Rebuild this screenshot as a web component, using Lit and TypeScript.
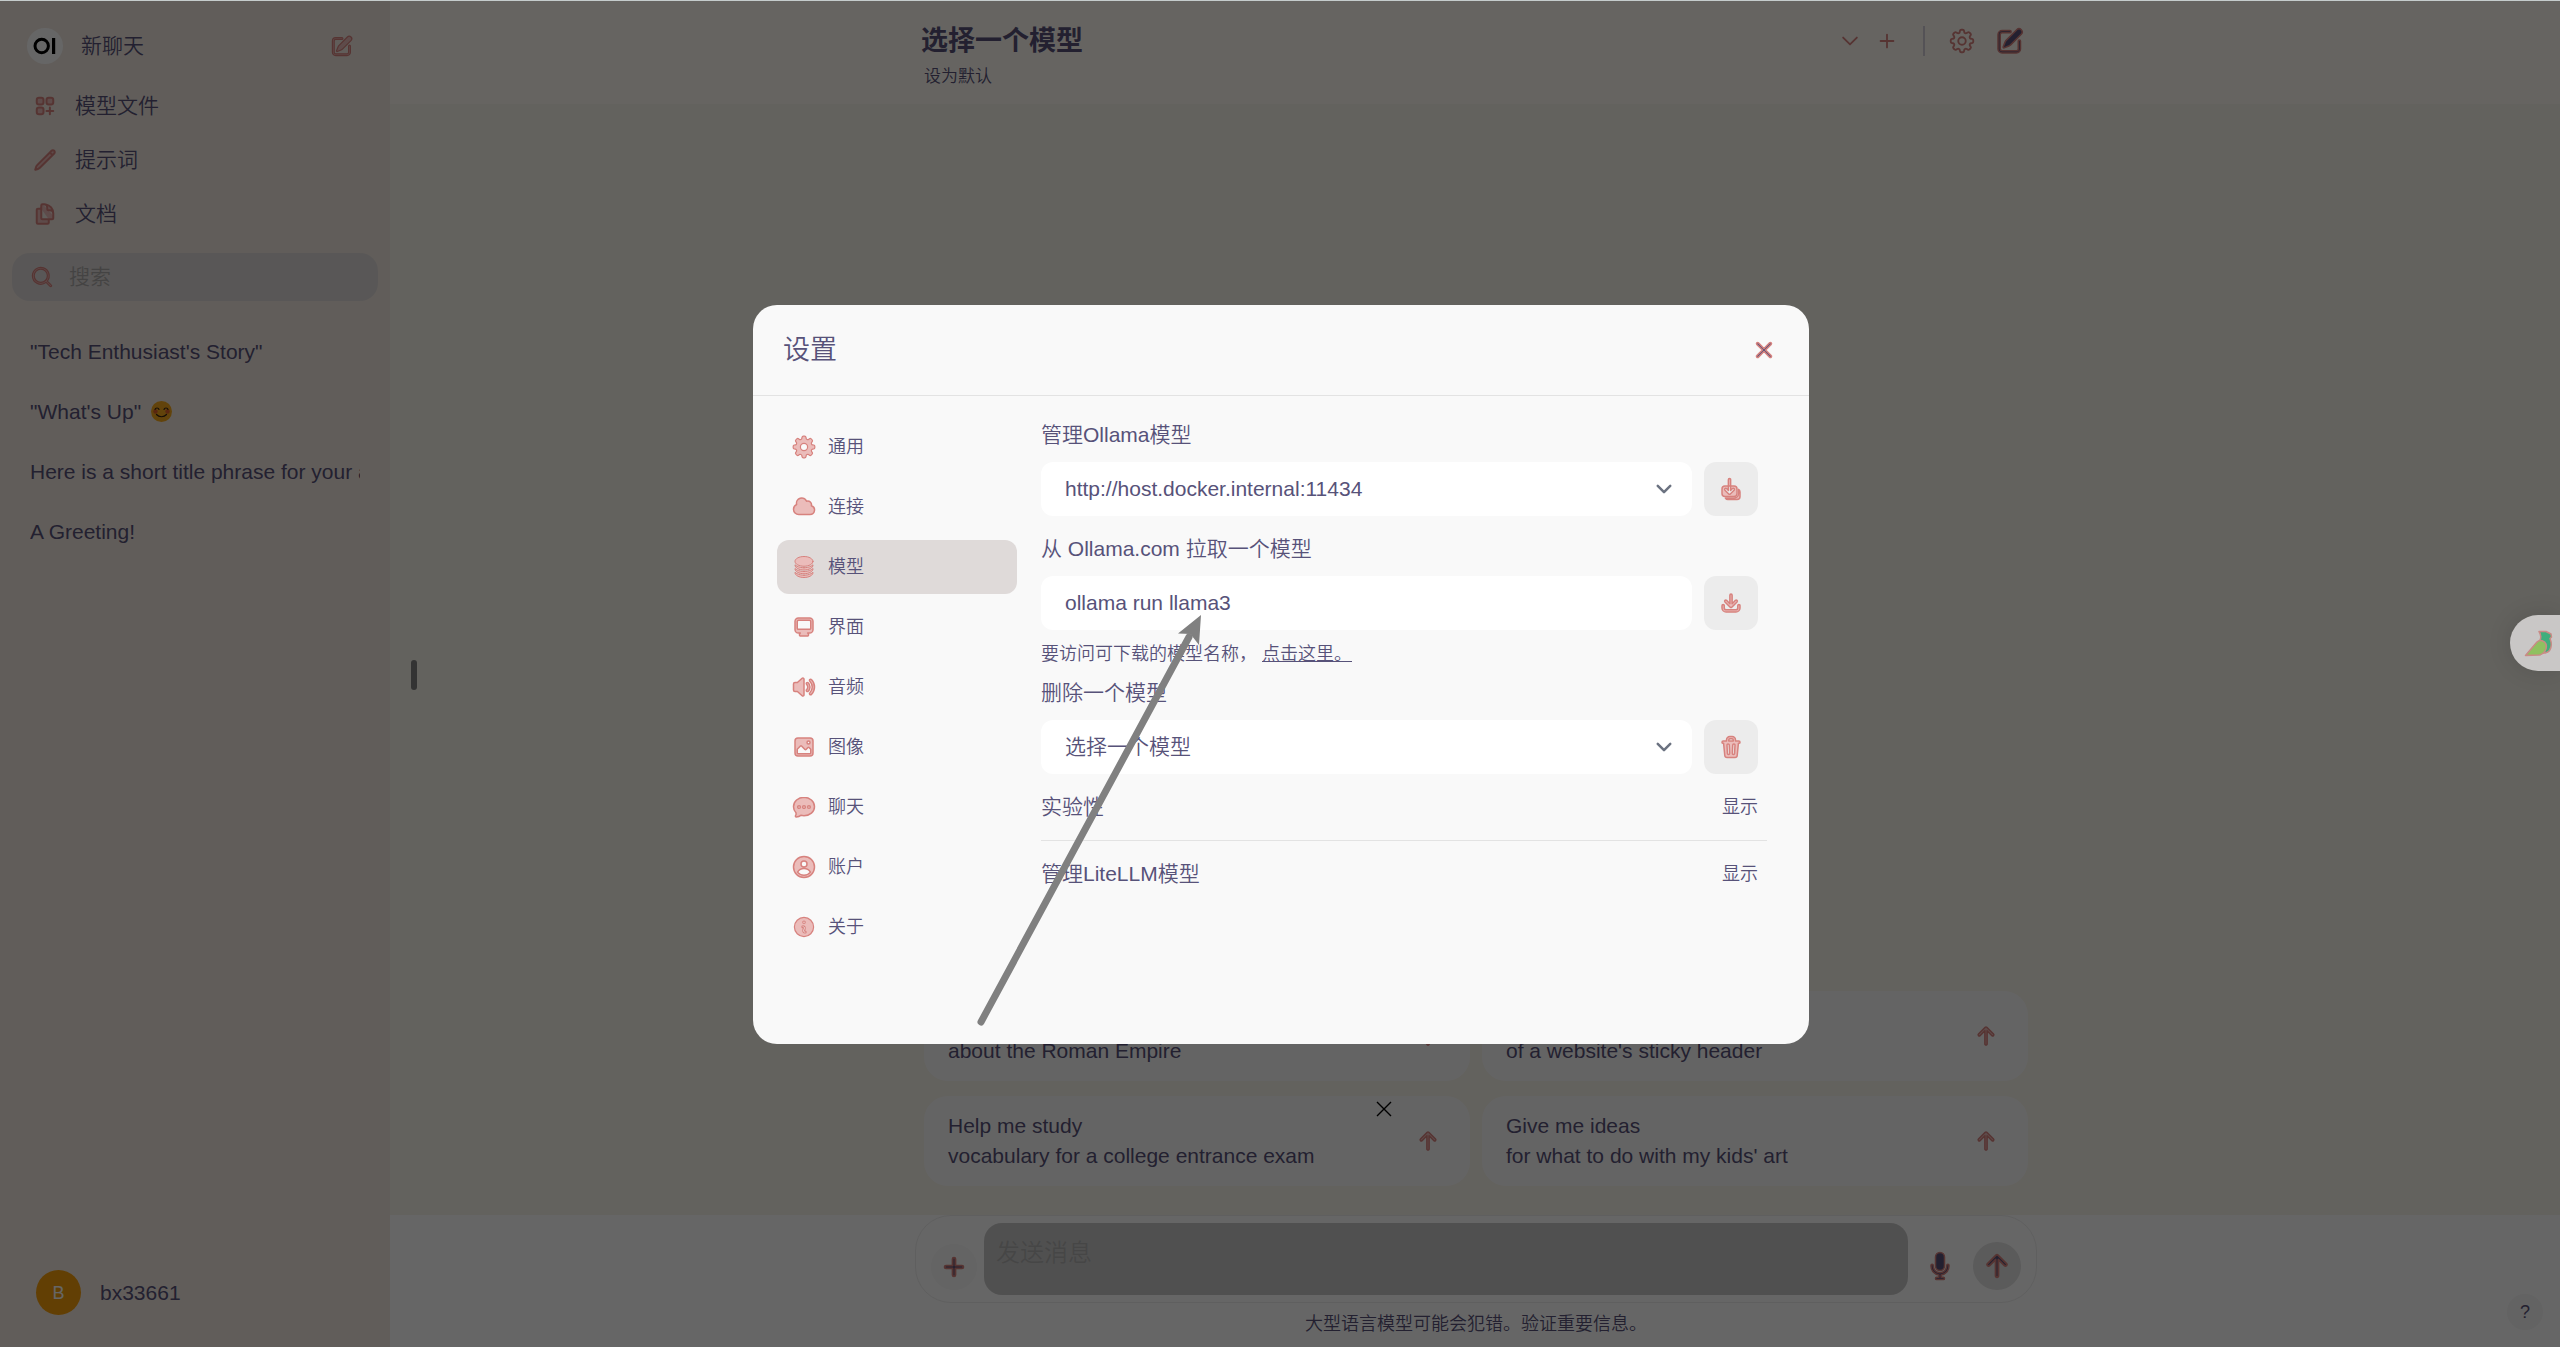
import { LitElement, html, svg, css } from "lit";
import { customElement, property } from "lit/decorators.js";

type Icon = { box: string; paths: string[]; outline?: number };

const ICONS: Record<string, Icon> = {
  edit: {
    box: "0 0 20 20",
    paths: [
      "M5.433 13.917l1.262-3.155A4 4 0 017.58 9.42l6.92-6.918a2.121 2.121 0 013 3l-6.92 6.918c-.383.383-.84.685-1.343.886l-3.154 1.262a.5.5 0 01-.65-.65z",
      "M3.5 5.75c0-.69.56-1.25 1.25-1.25H10A.75.75 0 0010 3H4.75A2.75 2.75 0 002 5.75v9.5A2.75 2.75 0 004.75 18h9.5A2.75 2.75 0 0017 15.25V10a.75.75 0 00-1.5 0v5.25c0 .69-.56 1.25-1.25 1.25h-9.5c-.69 0-1.25-.56-1.25-1.25v-9.5z",
    ],
  },
  modelfiles: {
    box: "0 0 24 24",
    outline: 2,
    paths: [
      "M13.5 16.875h3.375m0 0h3.375m-3.375 0V13.5m0 3.375v3.375M6 10.5h2.25a2.25 2.25 0 002.25-2.25V6a2.25 2.25 0 00-2.25-2.25H6A2.25 2.25 0 003.75 6v2.25A2.25 2.25 0 006 10.5zm0 9.75h2.25A2.25 2.25 0 0010.5 18v-2.25a2.25 2.25 0 00-2.25-2.25H6a2.25 2.25 0 00-2.25 2.25V18A2.25 2.25 0 006 20.25zm9.75-9.75H18a2.25 2.25 0 002.25-2.25V6A2.25 2.25 0 0018 3.75h-2.25A2.25 2.25 0 0013.5 6v2.25a2.25 2.25 0 002.25 2.25z",
    ],
  },
  pencil: {
    box: "0 0 24 24",
    outline: 2,
    paths: [
      "M16.862 4.487l1.687-1.688a1.875 1.875 0 112.652 2.652L6.832 19.82a4.5 4.5 0 01-1.897 1.13l-2.685.8.8-2.685a4.5 4.5 0 011.13-1.897L16.863 4.487zm0 0L19.5 7.125",
    ],
  },
  documents: {
    box: "0 0 24 24",
    outline: 2,
    paths: [
      "M15.75 17.25v3.375c0 .621-.504 1.125-1.125 1.125h-9.75a1.125 1.125 0 01-1.125-1.125V7.875c0-.621.504-1.125 1.125-1.125H6.75a9.06 9.06 0 011.5.124m7.5 10.376h3.375c.621 0 1.125-.504 1.125-1.125V11.25c0-4.46-3.243-8.161-7.5-8.876a9.06 9.06 0 00-1.5-.124H9.375c-.621 0-1.125.504-1.125 1.125v3.5m7.5 10.375H9.375a1.125 1.125 0 01-1.125-1.125v-9.25m12 6.625v-1.875a3.375 3.375 0 00-3.375-3.375h-1.5a1.125 1.125 0 01-1.125-1.125v-1.5a3.375 3.375 0 00-3.375-3.375H9.75",
    ],
  },
  search: {
    box: "0 0 20 20",
    paths: [
      "M9 3.5a5.5 5.5 0 100 11 5.5 5.5 0 000-11zM2 9a7 7 0 1112.452 4.391l3.328 3.329a.75.75 0 11-1.06 1.06l-3.329-3.328A7 7 0 012 9z",
    ],
  },
  chevron: { box: "0 0 24 24", outline: 2, paths: ["M19.5 8.25l-7.5 7.5-7.5-7.5"] },
  selectArrow: { box: "0 0 24 24", outline: 3, paths: ["M19.500 8.250l-7.500 7.500-7.500-7.500"] },
  thinPlus: { box: "0 0 24 24", outline: 2, paths: ["M12 5v14M5 12h14"] },
  gearOutline: {
    box: "0 0 24 24",
    outline: 1.5,
    paths: [
      "M10.343 3.94c.09-.542.56-.94 1.11-.94h1.093c.55 0 1.02.398 1.11.94l.149.894c.07.424.384.764.78.93.398.164.855.142 1.205-.108l.737-.527a1.125 1.125 0 011.45.12l.773.774c.39.389.44 1.002.12 1.45l-.527.737c-.25.35-.272.806-.107 1.204.165.397.505.71.93.78l.893.15c.543.09.94.56.94 1.109v1.094c0 .55-.397 1.02-.94 1.11l-.893.149c-.425.07-.765.383-.93.78-.165.398-.143.854.107 1.204l.527.738c.32.447.269 1.06-.12 1.45l-.774.773a1.125 1.125 0 01-1.449.12l-.738-.527c-.35-.25-.806-.272-1.203-.107-.397.165-.71.505-.781.929l-.149.894c-.09.542-.56.94-1.11.94h-1.094c-.55 0-1.019-.398-1.11-.94l-.148-.894c-.071-.424-.384-.764-.781-.93-.398-.164-.854-.142-1.204.108l-.738.527c-.447.32-1.06.269-1.45-.12l-.773-.774a1.125 1.125 0 01-.12-1.45l.527-.737c.25-.35.273-.806.108-1.204-.165-.397-.505-.71-.93-.78l-.894-.15c-.542-.09-.94-.56-.94-1.109v-1.094c0-.55.398-1.02.94-1.11l.894-.149c.424-.07.765-.383.93-.78.165-.398.143-.854-.107-1.204l-.527-.738a1.125 1.125 0 01.12-1.45l.773-.773a1.125 1.125 0 011.45-.12l.737.527c.35.25.807.272 1.204.107.397-.165.71-.505.78-.929l.15-.894z",
      "M15 12a3 3 0 11-6 0 3 3 0 016 0z",
    ],
  },
  gear: {
    box: "2 2 20 20",
    paths: [
      "M10.343 3.94c.09-.542.56-.94 1.11-.94h1.093c.55 0 1.02.398 1.11.94l.149.894c.07.424.384.764.78.93.398.164.855.142 1.205-.108l.737-.527a1.125 1.125 0 011.45.12l.773.774c.39.389.44 1.002.12 1.45l-.527.737c-.25.35-.272.806-.107 1.204.165.397.505.71.93.78l.893.15c.543.09.94.56.94 1.109v1.094c0 .55-.397 1.02-.94 1.11l-.893.149c-.425.07-.765.383-.93.78-.165.398-.143.854.107 1.204l.527.738c.32.447.269 1.06-.12 1.45l-.774.773a1.125 1.125 0 01-1.449.12l-.738-.527c-.35-.25-.806-.272-1.203-.107-.397.165-.71.505-.781.929l-.149.894c-.09.542-.56.94-1.11.94h-1.094c-.55 0-1.019-.398-1.11-.94l-.148-.894c-.071-.424-.384-.764-.781-.93-.398-.164-.854-.142-1.204.108l-.738.527c-.447.32-1.06.269-1.45-.12l-.773-.774a1.125 1.125 0 01-.12-1.45l.527-.737c.25-.35.273-.806.108-1.204-.165-.397-.505-.71-.93-.78l-.894-.15c-.542-.09-.94-.56-.94-1.109v-1.094c0-.55.398-1.02.94-1.11l.894-.149c.424-.07.765-.383.93-.78.165-.398.143-.854-.107-1.204l-.527-.738a1.125 1.125 0 01.12-1.45l.773-.773a1.125 1.125 0 011.45-.12l.737.527c.35.25.807.272 1.204.107.397-.165.71-.505.78-.929l.15-.894zM15 12a3 3 0 11-6 0 3 3 0 016 0z",
    ],
  },
  cloud: {
    box: "0 0 16 16",
    paths: [
      "M1 9.5A3.5 3.5 0 0 0 4.5 13H12a3 3 0 0 0 .917-5.857 2.503 2.503 0 0 0-3.198-3.019 3.5 3.5 0 0 0-6.628 2.171A3.5 3.5 0 0 0 1 9.5Z",
    ],
  },
  database: {
    box: "0 0 24 24",
    paths: [
      "M21 6.375c0 2.692-4.03 4.875-9 4.875S3 9.067 3 6.375 7.03 1.5 12 1.5s9 2.183 9 4.875z",
      "M12 12.75c2.685 0 5.19-.586 7.078-1.609a8.283 8.283 0 001.897-1.384c.016.121.025.244.025.368C21 12.817 16.97 15 12 15s-9-2.183-9-4.875c0-.124.009-.247.025-.368a8.285 8.285 0 001.897 1.384C6.809 12.164 9.315 12.75 12 12.75z",
      "M12 16.5c2.685 0 5.19-.586 7.078-1.609a8.282 8.282 0 001.897-1.384c.016.121.025.244.025.368 0 2.692-4.03 4.875-9 4.875s-9-2.183-9-4.875c0-.124.009-.247.025-.368a8.284 8.284 0 001.897 1.384C6.809 15.914 9.315 16.5 12 16.5z",
      "M12 20.25c2.685 0 5.19-.586 7.078-1.609a8.282 8.282 0 001.897-1.384c.016.121.025.244.025.368 0 2.692-4.03 4.875-9 4.875s-9-2.183-9-4.875c0-.124.009-.247.025-.368a8.284 8.284 0 001.897 1.384C6.809 19.664 9.315 20.25 12 20.25z",
    ],
  },
  screen: {
    box: "0 0 16 16",
    paths: [
      "M2 4.25A2.25 2.25 0 0 1 4.25 2h7.5A2.25 2.25 0 0 1 14 4.25v5.5A2.25 2.25 0 0 1 11.75 12h-1.312c.1.128.21.248.328.36a.75.75 0 0 1 .234.545v.345a.75.75 0 0 1-.75.75h-4.5a.75.75 0 0 1-.75-.75v-.345a.75.75 0 0 1 .234-.545c.118-.111.228-.232.328-.36H4.25A2.25 2.25 0 0 1 2 9.75v-5.5Zm2.25-.75a.75.75 0 0 0-.75.75v4.5c0 .414.336.75.75.75h7.5a.75.75 0 0 0 .75-.75v-4.5a.75.75 0 0 0-.75-.75h-7.5Z",
    ],
  },
  speaker: {
    box: "0 0 16 16",
    paths: [
      "M7.557 2.066A.75.75 0 0 1 8 2.75v10.5a.75.75 0 0 1-1.248.56L3.59 11H2a1 1 0 0 1-1-1V6a1 1 0 0 1 1-1h1.59l3.162-2.81a.75.75 0 0 1 .805-.124ZM12.95 3.05a.75.75 0 1 0-1.06 1.06 5.5 5.5 0 0 1 0 7.78.75.75 0 1 0 1.06 1.06 7 7 0 0 0 0-9.9Z",
      "M10.828 5.172a.75.75 0 1 0-1.06 1.06 2.5 2.5 0 0 1 0 3.536.75.75 0 1 0 1.06 1.06 4 4 0 0 0 0-5.656Z",
    ],
  },
  photo: {
    box: "0 0 16 16",
    paths: [
      "M2 4a2 2 0 0 1 2-2h8a2 2 0 0 1 2 2v8a2 2 0 0 1-2 2H4a2 2 0 0 1-2-2V4Zm10.5 5.707a.5.5 0 0 0-.146-.353l-1-1a.5.5 0 0 0-.708 0L9.354 9.646a.5.5 0 0 1-.708 0L6.354 7.354a.5.5 0 0 0-.708 0l-2 2a.5.5 0 0 0-.146.353V12a.5.5 0 0 0 .5.5h8a.5.5 0 0 0 .5-.5V9.707ZM12 5a1 1 0 1 1-2 0 1 1 0 0 1 2 0Z",
    ],
  },
  chat: {
    box: "0 0 16 16",
    paths: [
      "M8 1.500C4.130 1.500 1 4.300 1 7.900c0 1.500.62 2.900 1.660 3.900.2.700.1 1.400-.3 2-.25.4.05.9.5.86 1.300-.1 2.300-.5 3-1.100.68.2 1.400.3 2.140.3 3.870 0 7-2.700 7-5.960C15 4.300 11.870 1.500 8 1.500ZM5.600 8a.9.9 0 1 1-1.800 0 .9.9 0 0 1 1.800 0ZM8.900 8a.9.9 0 1 1-1.800 0 .9.9 0 0 1 1.800 0ZM12.200 8a.9.9 0 1 1-1.800 0 .9.9 0 0 1 1.800 0Z",
    ],
  },
  user: {
    box: "0 0 16 16",
    paths: [
      "M15 8A7 7 0 1 1 1 8a7 7 0 0 1 14 0Zm-5-2a2 2 0 1 1-4 0 2 2 0 0 1 4 0ZM8 9c-1.825 0-3.422.977-4.295 2.437A5.49 5.49 0 0 0 8 13.5a5.49 5.49 0 0 0 4.294-2.063A4.997 4.997 0 0 0 8 9Z",
    ],
  },
  info: {
    box: "0 0 20 20",
    paths: [
      "M18 10a8 8 0 11-16 0 8 8 0 0116 0zm-7-4a1 1 0 11-2 0 1 1 0 012 0zM9 9a.75.75 0 000 1.5h.253a.25.25 0 01.244.304l-.459 2.066A1.75 1.75 0 0010.747 15H11a.75.75 0 000-1.5h-.253a.25.25 0 01-.244-.304l.459-2.066A1.75 1.75 0 009.253 9H9z",
    ],
  },
  updateAll: {
    box: "0 0 16 16",
    paths: [
      "M7 1a.75.75 0 0 1 .75.75V6h-1.5V1.75A.75.75 0 0 1 7 1ZM6.25 6v2.94L5.03 7.72a.75.75 0 0 0-1.06 1.06l2.5 2.5a.75.75 0 0 0 1.06 0l2.5-2.5a.75.75 0 1 0-1.06-1.06L7.75 8.94V6H10a2 2 0 0 1 2 2v3a2 2 0 0 1-2 2H4a2 2 0 0 1-2-2V8a2 2 0 0 1 2-2h2.25Z",
      "M4.268 14A2 2 0 0 0 6 15h6a2 2 0 0 0 2-2v-3a2 2 0 0 0-1-1.732V11a3 3 0 0 1-3 3H4.268Z",
    ],
  },
  download: {
    box: "0 0 16 16",
    paths: [
      "M8.75 2.75a.75.75 0 0 0-1.5 0v5.69L5.03 6.22a.75.75 0 0 0-1.06 1.06l3.5 3.5a.75.75 0 0 0 1.06 0l3.5-3.5a.75.75 0 0 0-1.06-1.06L8.75 8.44V2.75Z",
      "M3.5 9.75a.75.75 0 0 0-1.5 0v1.5A2.75 2.75 0 0 0 4.75 14h6.5A2.75 2.75 0 0 0 14 11.25v-1.5a.75.75 0 0 0-1.5 0v1.5c0 .69-.56 1.25-1.25 1.25h-6.5c-.69 0-1.25-.56-1.25-1.25v-1.5Z",
    ],
  },
  trash: {
    box: "0 0 16 16",
    paths: [
      "M5 3.25V4H2.75a.75.75 0 0 0 0 1.5h.3l.815 8.15A1.5 1.5 0 0 0 5.357 15h5.285a1.5 1.5 0 0 0 1.493-1.35l.815-8.15h.3a.75.75 0 0 0 0-1.5H11v-.75A2.25 2.25 0 0 0 8.75 1h-1.5A2.25 2.25 0 0 0 5 3.25Zm2.25-.75a.75.75 0 0 0-.75.75V4h3v-.75a.75.75 0 0 0-.75-.75h-1.5ZM6.05 6a.75.75 0 0 1 .787.713l.275 5.5a.75.75 0 0 1-1.498.075l-.275-5.5A.75.75 0 0 1 6.05 6Zm3.9 0a.75.75 0 0 1 .712.787l-.275 5.5a.75.75 0 0 1-1.498-.075l.275-5.5a.75.75 0 0 1 .786-.711Z",
    ],
  },
  close: {
    box: "0 0 20 20",
    paths: [
      "M6.28 5.22a.75.75 0 00-1.06 1.06L8.94 10l-3.72 3.72a.75.75 0 101.06 1.06L10 11.06l3.72 3.72a.75.75 0 101.06-1.06L11.06 10l3.72-3.72a.75.75 0 00-1.06-1.06L10 8.94 6.28 5.22z",
    ],
  },
  arrowUp: {
    box: "0 0 16 16",
    paths: [
      "M8 14a.75.75 0 0 1-.75-.75V4.56L4.03 7.78a.75.75 0 0 1-1.06-1.06l4.5-4.5a.75.75 0 0 1 1.06 0l4.5 4.5a.75.75 0 0 1-1.06 1.06L8.75 4.56v8.69A.75.75 0 0 1 8 14Z",
    ],
  },
  plus: {
    box: "0 0 16 16",
    paths: [
      "M8.75 3.75a.75.75 0 0 0-1.5 0v3.5h-3.5a.75.75 0 0 0 0 1.5h3.5v3.5a.75.75 0 0 0 1.5 0v-3.5h3.5a.75.75 0 0 0 0-1.5h-3.5v-3.5Z",
    ],
  },
  mic: {
    box: "0 0 20 20",
    paths: [
      "M7 4a3 3 0 016 0v6a3 3 0 11-6 0V4z",
      "M5.5 9.643a.75.75 0 00-1.5 0V10c0 3.06 2.29 5.585 5.25 5.954V17.5h-1.5a.75.75 0 000 1.5h4.5a.75.75 0 000-1.5h-1.5v-1.546A6.001 6.001 0 0016 10v-.357a.75.75 0 00-1.5 0V10a4.5 4.5 0 01-9 0v-.357z",
    ],
  },
};

@customElement("ui-icon")
export class UiIcon extends LitElement {
  @property() name = "";
  @property({ reflect: true }) tone = "soft";

  static styles = css`
    :host { display: block; flex: none; width: 24px; height: 24px; }
    .glyph { display: block; width: 100%; height: 100%; fill: #ebbcba; stroke: #d7827e; overflow: visible; }
    :host([tone="ink"]) .glyph { fill: #575279; }
    :host([tone="line"]) .glyph { fill: none; }
    :host([tone="slate"]) .glyph { fill: none; stroke: #6b7280; }
  `;

  render() {
    const icon = ICONS[this.name];
    if (!icon) return html``;
    return html`<svg class="glyph" viewBox=${icon.box} stroke-width=${icon.outline ?? 1}
      stroke-linecap="round" stroke-linejoin="round" fill-rule="evenodd" aria-hidden="true">
      ${icon.paths.map((d) => svg`<path d=${d}></path>`)}
    </svg>`;
  }
}

const LINKS = [
  { icon: "modelfiles", label: "模型文件" },
  { icon: "pencil", label: "提示词" },
  { icon: "documents", label: "文档" },
];
const CHATS = [
  { title: `"Tech Enthusiast's Story"` },
  { title: `"What's Up" `, smile: true },
  { title: "Here is a short title phrase for your article" },
  { title: "A Greeting!" },
];
const TABS = [
  { icon: "gear", label: "通用" },
  { icon: "cloud", label: "连接" },
  { icon: "database", label: "模型" },
  { icon: "screen", label: "界面" },
  { icon: "speaker", label: "音频" },
  { icon: "photo", label: "图像" },
  { icon: "chat", label: "聊天" },
  { icon: "user", label: "账户" },
  { icon: "info", label: "关于" },
];
const PROMPTS = [
  { title: "Tell me a fun fact", text: "about the Roman Empire" },
  { title: "Show me a code snippet", text: "of a website's sticky header" },
  { title: "Help me study", text: "vocabulary for a college entrance exam" },
  { title: "Give me ideas", text: "for what to do with my kids' art" },
];

const controls = css`
  * { box-sizing: border-box; }
  button, input, select, textarea {
    font: inherit; color: inherit; border: 0; padding: 0; margin: 0;
    background: none; appearance: none; outline: none; text-align: left;
  }
  button { display: flex; align-items: center; justify-content: center; }
  a { color: inherit; text-decoration: none; }
  h1, h2, h3, p, ul { margin: 0; padding: 0; list-style: none; font: inherit; }
`;

@customElement("chat-sidebar")
export class ChatSidebar extends LitElement {
  static styles = [
    controls,
    css`
      :host { display: flex; flex-direction: column; flex: none; width: 390px; background: #f2e9e1; }
      .new-chat { display: flex; align-items: center; gap: 18px; padding: 27px 36px 27px 27px; }
      .logo { width: 36px; height: 36px; flex: none; }
      .new-label { flex: 1; }
      .links { display: flex; flex-direction: column; gap: 24px; padding: 0 33px; }
      .link { display: flex; align-items: center; gap: 18px; }
      .search { display: flex; align-items: center; gap: 15px; margin: 24px 12px 0; padding: 9px 18px; border-radius: 18px; background: #dfdad9; }
      .search-box { flex: 1; min-width: 0; height: 30px; }
      .search-box::placeholder { color: #aba9a8; opacity: 1; }
      .chats { display: flex; flex-direction: column; gap: 30px; padding: 36px 30px; flex: 1; }
      .chat { display: block; overflow: hidden; white-space: nowrap; }
      .smile { width: 21px; height: 21px; margin-left: 4px; vertical-align: -3px; }
      .account { justify-content: flex-start; gap: 19px; padding: 0 36px 32px; }
      .avatar { display: flex; align-items: center; justify-content: center; width: 45px; height: 45px; border-radius: 50%; background: #f59e0b; color: #fff; font-size: 18px; }
    `,
  ];

  private smile() {
    return html`<svg class="smile" viewBox="0 0 21 21" role="img" aria-label="😊">
      <circle cx="10.500" cy="10.500" r="10.500" fill="#f5a81c"></circle>
      <circle cx="4.500" cy="10.500" r="2.200" fill="#e0602a"></circle>
      <circle cx="16.500" cy="10.500" r="2.200" fill="#e0602a"></circle>
      <path d="M4 8.500c.5-2 3.500-2 4 0M13 8.500c.5-2 3.500-2 4 0M5.500 13.500c2.500 3 7.500 3 10 0" fill="none" stroke="#3a2410" stroke-width="1.200" stroke-linecap="round"></path>
    </svg>`;
  }

  render() {
    return html`
      <a class="new-chat" href="#new">
        <svg class="logo" viewBox="0 0 36 36" aria-hidden="true">
          <circle cx="18" cy="18" r="18" fill="#fff"></circle>
          <circle cx="14.7" cy="18" r="6.7" fill="none" stroke="#000" stroke-width="3"></circle>
          <rect x="25" y="10" width="3.2" height="16" fill="#000"></rect>
        </svg>
        <span class="new-label">新聊天</span>
        <ui-icon name="edit"></ui-icon>
      </a>
      <nav class="links">
        ${LINKS.map((l) => html`<a class="link" href="#"><ui-icon name=${l.icon}></ui-icon>${l.label}</a>`)}
      </nav>
      <label class="search">
        <ui-icon name="search"></ui-icon>
        <input class="search-box" type="text" placeholder="搜索" aria-label="搜索" />
      </label>
      <ul class="chats">
        ${CHATS.map((c) => html`<li><a class="chat" href="#">${c.title}${c.smile ? this.smile() : ""}</a></li>`)}
      </ul>
      <button class="account"><span class="avatar">B</span><span>bx33661</span></button>
    `;
  }
}

@customElement("chat-main")
export class ChatMain extends LitElement {
  static styles = [
    controls,
    css`
      :host { display: flex; flex-direction: column; flex: 1; min-width: 0; background: #f7f4ea; }
      .header { display: flex; justify-content: center; background: #fffaf3; height: 103px; padding-left: 2px; }
      .header-inner { display: flex; justify-content: space-between; align-items: flex-start; width: 100%; max-width: 1122px; padding: 21px 12px 0 6px; }
      .title { font-size: 27px; line-height: 38px; font-weight: 700; }
      .default { font-size: 17px; line-height: 24px; margin: 5px 0 0 3px; }
      .tools { display: flex; align-items: center; height: 38px; }
      .tool-small { width: 22px; height: 22px; }
      .tools-add { margin-left: 15px; }
      .rule { width: 2px; height: 30px; margin: 0 22px 0 25px; background: #d3cdd6; }
      .tool { width: 30px; height: 30px; }
      .tools-edit { margin-left: 18px; }
      .space { flex: 1; display: flex; flex-direction: column; justify-content: flex-end; align-items: center; padding: 0 0 29px 2px; }
      .prompts { display: grid; grid-template-columns: 1fr 1fr; gap: 15px 12px; width: 100%; max-width: 1104px; }
      .prompt { justify-content: space-between; width: 100%; padding: 15px 30px 15px 24px; border-radius: 24px; background: #fbfbfb; }
      .prompt-title { display: block; }
      .prompt-text { display: block; }
      .bottom { display: flex; flex-direction: column; align-items: center; background: #fff; padding: 0 0 11px 2px; }
      .composer { display: flex; align-items: flex-end; width: 100%; max-width: 1122px; padding: 7px 15px 7px; border: 1px solid #eeeeee; border-radius: 36px; }
      .round { width: 46px; height: 46px; border-radius: 50%; background: #f9f9f9; margin: 0 7px 5px 0; }
      .message { flex: 1; height: 72px; padding: 12px 12px; font-size: 24px; line-height: 36px; border-radius: 18px; background: #c9c9c9; resize: none; display: block; }
      .message::placeholder { color: #b0b0b0; opacity: 1; }
      .mic { margin: 0 18px 14px 17px; }
      .send { width: 48px; height: 48px; border-radius: 50%; background: #e3e3e3; margin-bottom: 5px; }
      .note { font-size: 18px; line-height: 24px; margin-top: 9px; }
    `,
  ];

  render() {
    return html`
      <header class="header">
        <div class="header-inner">
          <div>
            <h1 class="title">选择一个模型</h1>
            <button class="default">设为默认</button>
          </div>
          <div class="tools">
            <button aria-label="展开"><ui-icon class="tool-small" name="chevron" tone="line"></ui-icon></button>
            <button class="tools-add" aria-label="添加模型"><ui-icon class="tool-small" name="thinPlus" tone="line"></ui-icon></button>
            <span class="rule"></span>
            <button aria-label="设置"><ui-icon class="tool" name="gearOutline" tone="line"></ui-icon></button>
            <button class="tools-edit" aria-label="新聊天"><ui-icon class="tool" name="edit" tone="ink"></ui-icon></button>
          </div>
        </div>
      </header>
      <section class="space">
        <div class="prompts">
          ${PROMPTS.map((p) => html`<button class="prompt">
            <span><span class="prompt-title">${p.title}</span><span class="prompt-text">${p.text}</span></span>
            <ui-icon name="arrowUp"></ui-icon>
          </button>`)}
        </div>
      </section>
      <footer class="bottom">
        <form class="composer">
          <button class="round" type="button" aria-label="添加"><ui-icon class="tool" name="plus" tone="ink"></ui-icon></button>
          <textarea class="message" placeholder="发送消息" aria-label="发送消息"></textarea>
          <button class="mic" type="button" aria-label="语音"><ui-icon class="tool" name="mic" tone="ink"></ui-icon></button>
          <button class="send" type="button" aria-label="发送"><ui-icon class="tool" name="arrowUp" tone="ink"></ui-icon></button>
        </form>
        <p class="note">大型语言模型可能会犯错。验证重要信息。</p>
      </footer>
    `;
  }
}

@customElement("settings-dialog")
export class SettingsDialog extends LitElement {
  static styles = [
    controls,
    css`
      :host { display: block; position: relative; width: 1056px; max-width: 96%; border-radius: 24px; background: #f9f9f9; }
      .head { display: flex; align-items: center; justify-content: space-between; padding: 27px 30px; border-bottom: 1px solid #e3e3e3; }
      .title { font-size: 27px; line-height: 36px; }
      .close-icon { width: 30px; height: 30px; }
      .body { display: flex; gap: 24px; padding: 24px 42px 24px 24px; min-height: 648px; }
      .tabs { display: flex; flex-direction: column; gap: 6px; width: 240px; flex: none; }
      .tab { justify-content: flex-start; gap: 12px; height: 54px; padding: 0 15px; border-radius: 12px; font-size: 18px; }
      .tab-active { background: #dfdad9; }
      .panel { flex: 1; min-width: 0; }
      .label { display: block; margin-bottom: 12px; }
      .row { display: flex; gap: 12px; padding-right: 9px; margin-bottom: 18px; }
      .field { flex: 1; min-width: 0; height: 54px; padding: 0 24px; border-radius: 12px; background: #fff; }
      .pick { display: grid; flex: 1; align-items: center; }
      .pick > * { grid-area: 1 / 1; }
      .pick-icon { justify-self: end; width: 20px; height: 20px; margin-right: 18px; pointer-events: none; }
      .act { width: 54px; height: 54px; border-radius: 12px; background: #ececec; }
      .pull { margin-bottom: 12px; }
      .hint { font-size: 18px; line-height: 24px; margin-bottom: 12px; }
      .hint-link { text-decoration: underline; }
      .fold { display: flex; align-items: center; justify-content: space-between; padding-right: 9px; }
      .show { font-size: 18px; }
      .divider { border: 0; border-top: 1px solid #e3e3e3; margin: 18px 0; }
      .pointer { position: absolute; left: 216px; top: 304px; width: 244px; height: 424px; pointer-events: none; }
    `,
  ];

  render() {
    return html`
      <header class="head">
        <h2 class="title">设置</h2>
        <button aria-label="关闭"><ui-icon class="close-icon" name="close" tone="ink"></ui-icon></button>
      </header>
      <div class="body">
        <nav class="tabs">
          ${TABS.map((t) => html`<button class="tab ${t.label === "模型" ? "tab-active" : ""}">
            <ui-icon name=${t.icon}></ui-icon>${t.label}
          </button>`)}
        </nav>
        <section class="panel">
          <label class="label" for="host">管理Ollama模型</label>
          <div class="row">
            <span class="pick">
              <select class="field" id="host"><option>http://host.docker.internal:11434</option></select>
              <ui-icon class="pick-icon" name="selectArrow" tone="slate"></ui-icon>
            </span>
            <button class="act" aria-label="更新全部模型"><ui-icon name="updateAll"></ui-icon></button>
          </div>
          <label class="label" for="pull">从 Ollama.com 拉取一个模型</label>
          <div class="row pull">
            <input class="field" id="pull" type="text" value="ollama run llama3" />
            <button class="act" aria-label="下载"><ui-icon name="download"></ui-icon></button>
          </div>
          <p class="hint">要访问可下载的模型名称， <a class="hint-link" href="#library">点击这里。</a></p>
          <label class="label" for="remove">删除一个模型</label>
          <div class="row">
            <span class="pick">
              <select class="field" id="remove"><option>选择一个模型</option></select>
              <ui-icon class="pick-icon" name="selectArrow" tone="slate"></ui-icon>
            </span>
            <button class="act" aria-label="删除"><ui-icon name="trash"></ui-icon></button>
          </div>
          <div class="fold"><h3>实验性</h3><button class="show">显示</button></div>
          <hr class="divider" />
          <div class="fold"><h3>管理LiteLLM模型</h3><button class="show">显示</button></div>
        </section>
      </div>
      <svg class="pointer" viewBox="0 0 244 424" aria-hidden="true">
        <path d="M12 413L220 28" fill="none" stroke="#808080" stroke-width="7" stroke-linecap="round"></path>
        <path d="M232 6L209 24.500L221.500 25L230 36Z" fill="#808080"></path>
      </svg>
    `;
  }
}

@customElement("app-root")
export class AppRoot extends LitElement {
  static styles = [
    controls,
    css`
      :host {
        display: block; color: #575279; font-size: 21px; line-height: 30px; font-weight: 350;
        font-family: "Liberation Sans", "Noto Sans CJK SC", sans-serif;
      }
      .page { position: relative; display: flex; min-height: 100vh; border-top: 1px solid #c5cccc; overflow: hidden; }
      .handle { position: absolute; left: 411px; top: 659px; width: 6px; height: 30px; border-radius: 3px; background: #808080; }
      .dismiss { position: absolute; left: 1376px; top: 1100px; width: 16px; height: 16px; }
      .help { position: absolute; right: 17px; bottom: 17px; width: 36px; height: 36px; border-radius: 50%; background: #f7f7f7; font-size: 18px; }
      .veil { position: absolute; inset: 0; display: flex; align-items: center; justify-content: center; background: rgba(0, 0, 0, 0.6); padding-left: 2px; }
      .bird { position: absolute; right: 0; top: 614px; width: 50px; height: 56px; border-radius: 28px 0 0 28px; background: #c9c7c6; box-shadow: 0 0 24px rgba(0, 0, 0, 0.12); }
      .bird-art { width: 50px; height: 56px; display: block; }
    `,
  ];

  render() {
    return html`
      <div class="page">
        <chat-sidebar></chat-sidebar>
        <chat-main></chat-main>
        <button class="handle" aria-label="侧边栏"></button>
        <button class="help" aria-label="帮助">?</button>
        <div class="veil"><settings-dialog role="dialog" aria-label="设置"></settings-dialog></div>
        <svg class="dismiss" viewBox="0 0 16 16" aria-hidden="true">
          <path d="M1 1l14 14M15 1L1 15" stroke="#000" stroke-width="1.400"></path>
        </svg>
        <button class="bird" aria-label="翻译">
          <svg class="bird-art" viewBox="0 0 50 56" aria-hidden="true">
            <path d="M29 16.500h7l5 2.500.5 3-1.500 1.500c2 5 1.500 9-.5 12-1.500 2-3.500 2.500-6.500 2.500L30 25c1.500-3 1-5.500-1-8.500z" fill="#3fae7c" stroke="#c98a85" stroke-width="1.500" stroke-linejoin="round"></path>
            <path d="M15.500 40.500L27 27c3-3 8-1 9 2 1.500 5-2 10.500-7 11z" fill="#8fc060" stroke="#c98a85" stroke-width="1.500" stroke-linejoin="round"></path>
          </svg>
        </button>
      </div>
    `;
  }
}
